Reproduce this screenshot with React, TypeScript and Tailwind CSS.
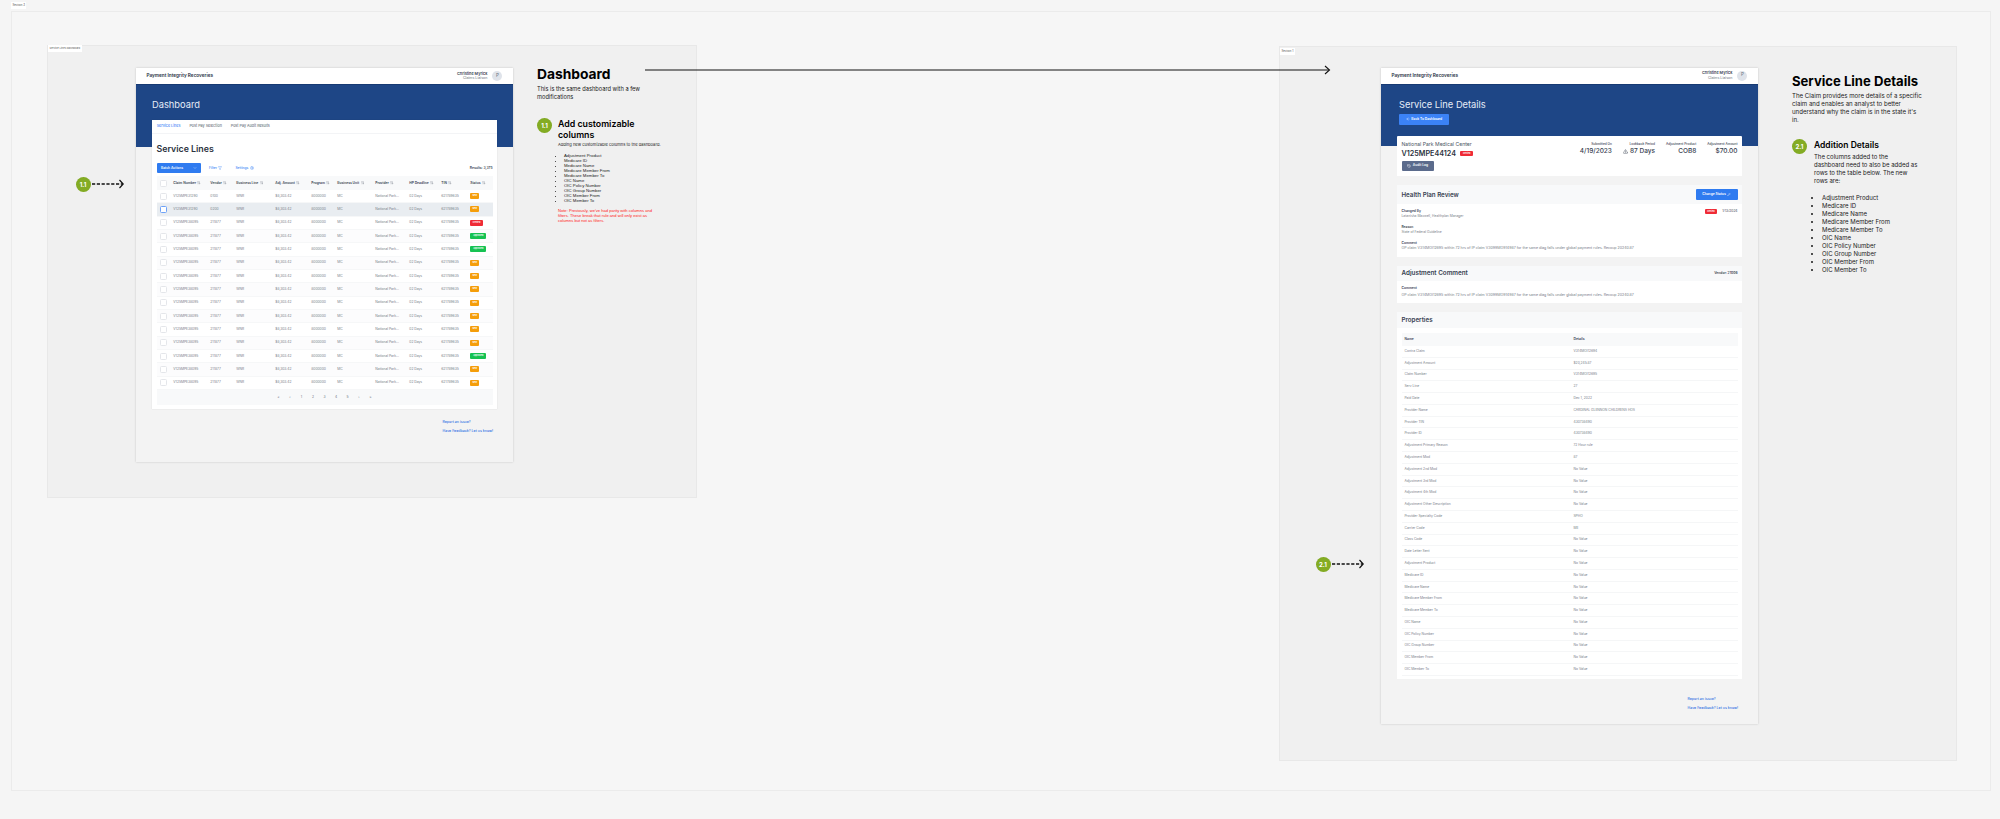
import { ArrowLeft, ArrowUpDown, ChevronDown, Filter, History, Pencil, Settings, TriangleAlert } from 'lucide-react';

const columns = ['Claim Number', 'Vendor', 'Business Line', 'Adj. Amount', 'Program', 'Business Unit', 'Provider', 'HP Deadline', 'TIN', 'Status'];

const rows = [
  { claim: 'V125MPE31290', vendor: '0100', status: 'New' },
  { claim: 'V125MPE31290', vendor: '0200', status: 'New', selected: true },
  { claim: 'V125MPE38095', vendor: '211877', status: 'Denied' },
  { claim: 'V125MPE38095', vendor: '211877', status: 'Approved' },
  { claim: 'V125MPE38095', vendor: '211877', status: 'Approved' },
  { claim: 'V125MPE38095', vendor: '211877', status: 'New' },
  { claim: 'V125MPE38095', vendor: '211877', status: 'New' },
  { claim: 'V125MPE38095', vendor: '211877', status: 'New' },
  { claim: 'V125MPE38095', vendor: '211877', status: 'New' },
  { claim: 'V125MPE38095', vendor: '211877', status: 'New' },
  { claim: 'V125MPE38095', vendor: '211877', status: 'New' },
  { claim: 'V125MPE38095', vendor: '211877', status: 'New' },
  { claim: 'V125MPE38095', vendor: '211877', status: 'Approved' },
  { claim: 'V125MPE38095', vendor: '211877', status: 'New' },
  { claim: 'V125MPE38095', vendor: '211877', status: 'New' },
];

const properties = [
  ['Contra Claim', 'V314MOI12694'],
  ['Adjustment Amount', '$20,245.87'],
  ['Claim Number', 'V314MOI12695'],
  ['Serv Line', '27'],
  ['Paid Date', 'Dec 1, 2022'],
  ['Provider Name', 'CARDINAL GLENNON CHILDRENS HOS'],
  ['Provider TIN', '430738490'],
  ['Provider ID', '430738490'],
  ['Adjustment Primary Reason', '72 Hour rule'],
  ['Adjustment Mod', '87'],
  ['Adjustment 2nd Mod', 'No Value'],
  ['Adjustment 3rd Mod', 'No Value'],
  ['Adjustment 4th Mod', 'No Value'],
  ['Adjustment Other Description', 'No Value'],
  ['Provider Specialty Code', 'SPHO'],
  ['Carrier Code', 'ME'],
  ['Class Code', 'No Value'],
  ['Date Letter Sent', 'No Value'],
  ['Adjustment Product', 'No Value'],
  ['Medicare ID', 'No Value'],
  ['Medicare Name', 'No Value'],
  ['Medicare Member From', 'No Value'],
  ['Medicare Member To', 'No Value'],
  ['OIC Name', 'No Value'],
  ['OIC Policy Number', 'No Value'],
  ['OIC Group Number', 'No Value'],
  ['OIC Member From', 'No Value'],
  ['OIC Member To', 'No Value'],
];

const newColumns = ['Adjustment Product', 'Medicare ID', 'Medicare Name', 'Medicare Member From', 'Medicare Member To', 'OIC Name', 'OIC Policy Number', 'OIC Group Number', 'OIC Member From', 'OIC Member To'];

const comment = 'OP claim V314MOI12695 within 72 hrs of IP claim V3099MO914987 for the same diag falls under global payment rules. Recoup 20240.87';

const rowGrid = 'grid grid-cols-[13.8px_37px_26px_39px_36px_26px_38px_34px_32px_29px_1fr] items-center';

function StatusPill({ status }: { status: string }) {
  const color = status === 'New' ? 'bg-[#f59e0b] w-[9px]' : status === 'Denied' ? 'bg-[#ef2b36] w-[12.5px]' : 'bg-[#16c252] w-[16px]';
  return (
    <span className={`flex h-[6px] items-center justify-center rounded-[1px] text-[2.2px] font-semibold leading-none text-white ${color}`}>
      {status}
    </span>
  );
}

function Check({ active }: { active?: boolean }) {
  return <span className={`block h-[7px] w-[7px] rounded-[1.5px] bg-white border ${active ? 'border-[#6ea2f7]' : 'border-[#e4e6ea]'}`} />;
}

function AppHeader() {
  return (
    <div className="flex h-[16px] items-center justify-between bg-white pl-[10.5px] pr-[10.7px]">
      <span className="text-[4.7px] font-semibold text-[#27303f]">Payment Integrity Recoveries</span>
      <div className="flex items-center gap-[5px]">
        <div className="flex flex-col items-end leading-[5.4px]">
          <span className="text-[3.8px] font-semibold text-[#374151]">Christine Myrick</span>
          <span className="text-[3.6px] text-[#6b7280]">Claims Liaison</span>
        </div>
        <span className="flex h-[10px] w-[10px] items-center justify-center rounded-full bg-[#dfe3ea] text-[4.5px] text-[#6b7280]">P</span>
      </div>
    </div>
  );
}

function FooterLinks() {
  return (
    <div className="flex justify-end pr-[20px]">
      <div className="flex flex-col gap-[5.2px] text-[3.55px] font-medium leading-[3.8px] text-[#2f6fe4]">
        <span>Report an issue?</span>
        <span>Have Feedback? Let us know!</span>
      </div>
    </div>
  );
}

function DashboardScreen() {
  return (
    <div className="h-[394px] w-[377px] bg-[#f3f3f3] shadow-[0_0_2px_rgba(0,0,0,0.18)]">
      <AppHeader />
      <div className="h-[63px] border-t border-[#173a73] bg-[#1e4686] pl-[16px] pt-[13px]">
        <h2 className="text-[9.3px] leading-[14px] text-[#e6edf8]">Dashboard</h2>
      </div>
      <div className="relative mx-[16px] -mt-[27px] h-[289px] bg-white shadow-[0_0_1px_rgba(0,0,0,0.15)]">
        <div className="flex h-[13.5px] items-center gap-[9px] border-b border-[#f3f4f6] px-[4.7px] text-[3.7px] text-[#4b5563]">
          <span className="font-medium text-[#3b82f6]">Service Lines</span>
          <span>Post Pay Selection</span>
          <span>Post Pay Audit Results</span>
        </div>
        <div className="px-[4.5px]">
          <h3 className="pt-[8px] text-[8.8px] font-semibold leading-[13px] text-[#2b3340]">Service Lines</h3>
          <div className="mt-[8.5px] flex h-[10px] items-center text-[3.3px] font-medium">
            <button className="flex h-[10px] w-[44.5px] items-center justify-between rounded-[1px] bg-[#2f7bf0] px-[4.5px] text-white">
              <span className="font-semibold">Batch Actions</span>
              <ChevronDown className="h-[4px] w-[4px]" />
            </button>
            <span className="ml-[8px] flex items-center gap-[1.5px] text-[#3b82f6]">
              Filter <Filter className="h-[4px] w-[4px]" />
            </span>
            <span className="ml-[13px] flex items-center gap-[1.5px] text-[#3b82f6]">
              Settings <Settings className="h-[4px] w-[4px]" />
            </span>
            <span className="ml-auto font-semibold text-[#374151]">Results: 3,375</span>
          </div>
          <div className={`mt-[3px] h-[14px] bg-[#f8f9fa] pl-[3px] ${rowGrid}`}>
            <Check />
            {columns.map((c) => (
              <span key={c} className="flex items-center gap-[1.5px] whitespace-nowrap text-[3.3px] font-semibold text-[#374151]">
                {c} <ArrowUpDown className="h-[3.5px] w-[3.5px] text-[#6b7280]" />
              </span>
            ))}
          </div>
          {rows.map((r, i) => (
            <div key={i} className={`h-[13.33px] border-b border-[#f6f7f8] pl-[3px] text-[3.3px] text-[#777d88] ${rowGrid} ${r.selected ? 'bg-[#e9edf1]' : i % 2 === 1 ? 'bg-[#fcfcfd]' : 'bg-white'}`}>
              <Check active={r.selected} />
              <span>{r.claim}</span>
              <span>{r.vendor}</span>
              <span>WNR</span>
              <span>$8,303.42</span>
              <span>8000000</span>
              <span>MC</span>
              <span>National Park...</span>
              <span>02 Days</span>
              <span>621789635</span>
              <StatusPill status={r.status} />
            </div>
          ))}
          <div className="flex h-[15px] items-center justify-center gap-[8px] bg-[#f8f9fa] text-[3.3px] text-[#6b7280]">
            {['«', '‹', '1', '2', '3', '4', '5', '›', '»'].map((p) => (
              <span key={p} className="w-[3.5px] text-center">{p}</span>
            ))}
          </div>
        </div>
      </div>
      <div className="mt-[12px]">
        <FooterLinks />
      </div>
    </div>
  );
}

function DenyPill() {
  return <span className="flex h-[5.5px] w-[12.5px] items-center justify-center rounded-[1px] bg-[#ef2b36] text-[2.2px] font-semibold text-white">Denied</span>;
}

function SummaryStat({ label, value, icon }: { label: string; value: string; icon?: boolean }) {
  return (
    <div className="flex flex-col items-end">
      <span className="text-[3.2px] font-medium leading-[5px] text-[#374151]">{label}</span>
      <span className="flex items-center gap-[2px] text-[6.5px] font-medium leading-[9px] text-[#374151]">
        {icon && <TriangleAlert className="h-[5px] w-[5px]" />}
        {value}
      </span>
    </div>
  );
}

function Field({ label, value }: { label: string; value: string }) {
  return (
    <div>
      <div className="text-[3.3px] font-semibold leading-[5.5px] text-[#374151]">{label}</div>
      <div className="text-[3.3px] leading-[5.5px] text-[#777d88]">{value}</div>
    </div>
  );
}

function DetailsScreen() {
  return (
    <div className="h-[656.5px] w-[377px] bg-[#f3f3f3] shadow-[0_0_2px_rgba(0,0,0,0.18)]">
      <AppHeader />
      <div className="h-[62px] border-t border-[#173a73] bg-[#1e4686] pl-[18px] pt-[13.5px]">
        <h2 className="text-[9.3px] leading-[14px] text-[#e6edf8]">Service Line Details</h2>
        <button className="mt-[2px] flex h-[10.5px] w-[50px] items-center justify-center gap-[1.5px] rounded-[1px] bg-[#3b82f6] text-[3.3px] font-semibold text-white">
          <ArrowLeft className="h-[4px] w-[4px]" /> Back To Dashboard
        </button>
      </div>
      <div className="mx-[16px] flex flex-col gap-[9px]">
        <div className="relative -mt-[9.5px] flex h-[40px] justify-between rounded-t-[1px] bg-white pl-[4.5px] pr-[4.5px] pt-[5px]">
          <div>
            <div className="text-[5.1px] leading-[7px] text-[#4b5563]">National Park Medical Center</div>
            <div className="flex items-center gap-[4.5px] text-[7.2px] font-semibold leading-[11px] text-[#2b3340]">
              V125MPE44124 <DenyPill />
            </div>
            <button className="mt-[1.5px] flex h-[10px] w-[32.5px] items-center justify-center gap-[1.5px] rounded-[1px] bg-[#5b6b8c] text-[3.3px] font-semibold text-white">
              <History className="h-[4px] w-[4px]" /> Audit Log
            </button>
          </div>
          <div className="flex gap-[11px] pt-[0.5px]">
            <SummaryStat label="Submitted On" value="4/19/2023" />
            <SummaryStat label="Lookback Period" value="87 Days" icon />
            <SummaryStat label="Adjustment Product" value="COB8" />
            <SummaryStat label="Adjustment Amount" value="$70.00" />
          </div>
        </div>

        <div className="h-[72px] bg-white">
          <div className="flex h-[19px] items-center justify-between bg-[#f8f9fa] px-[4.5px]">
            <span className="text-[6.2px] font-semibold text-[#374151]">Health Plan Review</span>
            <button className="flex h-[10.5px] w-[42px] items-center justify-center gap-[1.5px] rounded-[1px] bg-[#2f7bf0] text-[3.3px] font-semibold text-white">
              Change Status <Pencil className="h-[3.5px] w-[3.5px]" />
            </button>
          </div>
          <div className="flex justify-between px-[4.5px] pt-[4.5px]">
            <div className="flex flex-col gap-[5px]">
              <Field label="Changed By" value="Latanisha Maxwell, Healthplan Manager" />
              <Field label="Reason" value="State of Federal Guideline" />
              <div>
                <div className="text-[3.3px] font-semibold leading-[5.5px] text-[#374151]">Comment</div>
                <div className="text-[3.6px] leading-[5.5px] text-[#777d88]">{comment}</div>
              </div>
            </div>
            <div className="flex h-[5.5px] items-center gap-[5px] text-[3.3px] text-[#374151]">
              <DenyPill /> 1/13/2024
            </div>
          </div>
        </div>

        <div className="h-[37px] bg-white">
          <div className="flex h-[15px] items-center justify-between bg-[#f8f9fa] px-[4.5px]">
            <span className="text-[6.3px] font-semibold text-[#374151]">Adjustment Comment</span>
            <span className="text-[3.3px] font-semibold text-[#374151]">Vendor: 21006</span>
          </div>
          <div className="px-[4.5px] pt-[4.5px]">
            <div className="text-[3.3px] font-semibold leading-[5.5px] text-[#374151]">Comment</div>
            <div className="mt-[2px] text-[3.6px] leading-[5.5px] text-[#777d88]">{comment}</div>
          </div>
        </div>

        <div className="h-[367px] bg-white">
          <div className="flex h-[16px] items-center bg-[#f8f9fa] px-[4.5px]">
            <span className="text-[6.2px] font-semibold text-[#374151]">Properties</span>
          </div>
          <div className="px-[4.5px] pt-[5px]">
            <div className="grid h-[13px] grid-cols-[169px_1fr] items-center bg-[#f8f9fa] pl-[3px] text-[3.3px] font-semibold text-[#374151]">
              <span>Name</span>
              <span>Details</span>
            </div>
            {properties.map(([name, value]) => (
              <div key={name} className="grid h-[11.79px] grid-cols-[169px_1fr] items-center border-b border-[#f5f6f7] pl-[3px] text-[3.3px] text-[#777d88]">
                <span>{name}</span>
                <span>{value}</span>
              </div>
            ))}
          </div>
        </div>
      </div>
      <div className="mt-[19px]">
        <FooterLinks />
      </div>
    </div>
  );
}

function StepBadge({ label }: { label: string }) {
  return (
    <span className="relative flex h-[15px] w-[15px] shrink-0 items-center justify-center rounded-full border border-dotted border-[#7fa821] bg-[#84ac24] text-[6px] font-bold text-white">
      {label}
    </span>
  );
}

function StepArrow({ width }: { width: number }) {
  return (
    <svg width={width} height="10" viewBox={`0 0 ${width} 10`} fill="none" stroke="#111" className="block">
      <line x1="0" y1="5" x2={width - 1} y2="5" strokeWidth="1.3" strokeDasharray="3.2 1.6" />
      <path d={`M${width - 4.5} 1 L${width - 0.8} 5 L${width - 4.5} 9`} strokeWidth="1.2" />
    </svg>
  );
}

function Bullets({ items, className }: { items: string[]; className: string }) {
  return (
    <ul className={`list-disc ${className}`}>
      {items.map((item) => (
        <li key={item}>{item}</li>
      ))}
    </ul>
  );
}

export default function App() {
  return (
    <div className="relative h-[819px] w-[2000px] overflow-hidden bg-[#f5f5f5] font-['Inter',sans-serif]">
      {/* Canvas section */}
      <div className="absolute left-[11px] top-[11px] h-[780px] w-[1980px] border border-[#ebebeb] bg-[#f6f6f6]" />
      <span className="absolute left-[11px] top-[2px] flex h-[7px] items-center bg-white px-[1.5px] text-[2.8px] text-[#555]">Section 3</span>

      {/* Frame 1 */}
      <div className="absolute left-[47px] top-[45px] h-[453px] w-[650px] border border-[#e8e8e8] bg-[#f0f0f0]" />
      <span className="absolute left-[48px] top-[45px] flex h-[7px] items-center bg-white px-[1.5px] text-[2.6px] text-[#555]">Service Lines Dashboard</span>
      <div className="absolute left-[136px] top-[68px]">
        <DashboardScreen />
      </div>
      <div className="absolute left-[75.5px] top-[176.5px] flex items-center gap-[1.5px]">
        <StepBadge label="1.1" />
        <StepArrow width={32} />
      </div>

      {/* Notes for frame 1 */}
      <div className="absolute left-[537px] top-[64px] w-[150px] text-[#1a1a1a]">
        <h2 className="text-[13.8px] font-bold leading-[20px] text-black">Dashboard</h2>
        <p className="mt-[1px] w-[118px] text-[5.7px] leading-[8px]">This is the same dashboard with a few modifications</p>
        <div className="mt-[17px] flex gap-[6px]">
          <StepBadge label="1.1" />
          <div className="w-[105px]">
            <h3 className="text-[8.8px] font-semibold leading-[11px] text-black">Add customizable columns</h3>
            <p className="mt-[1.5px] whitespace-nowrap text-[4.1px] leading-[5px]">Adding new customizable columns to the dashboard.</p>
            <Bullets items={newColumns} className="mt-[6px] pl-[6px] font-['Liberation_Sans',sans-serif] text-[4.3px] leading-[5px]" />
            <p className="mt-[5px] w-[104px] font-['Liberation_Sans',sans-serif] text-[4.1px] leading-[5px] text-[#ff1a1a]">
              Note: Previously, we've had parity with columns and filters. These break that rule and will only exist as columns but not as filters.
            </p>
          </div>
        </div>
      </div>

      {/* Frame 2 */}
      <div className="absolute left-[1279px] top-[46px] h-[715px] w-[678px] border border-[#e8e8e8] bg-[#f0f0f0]" />
      <span className="absolute left-[1280px] top-[48px] flex h-[7px] items-center bg-white px-[1.5px] text-[2.8px] text-[#555]">Section 1</span>
      <div className="absolute left-[1381px] top-[67.5px]">
        <DetailsScreen />
      </div>
      <div className="absolute left-[1315.5px] top-[556.5px] flex items-center gap-[1.5px]">
        <StepBadge label="2.1" />
        <StepArrow width={32} />
      </div>

      {/* Frame link */}
      <svg className="absolute left-[645px] top-[65px]" width="686" height="10" viewBox="0 0 686 10" fill="none" stroke="#111">
        <line x1="0" y1="5" x2="684" y2="5" strokeWidth="1.1" />
        <path d="M680 1 L684.5 5 L680 9" strokeWidth="1.1" />
      </svg>

      {/* Notes for frame 2 */}
      <div className="absolute left-[1792px] top-[70.5px] w-[135px] text-[#1a1a1a]">
        <h2 className="text-[13.1px] font-bold leading-[20px] text-black">Service Line Details</h2>
        <p className="mt-[1px] w-[131px] text-[6.1px] leading-[8.2px]">The Claim provides more details of a specific claim and enables an analyst to better understand why the claim is in the state it's in.</p>
        <div className="mt-[15px] flex gap-[7px]">
          <StepBadge label="2.1" />
          <div className="w-[112px]">
            <h3 className="mt-[1px] text-[8.5px] font-semibold leading-[11px] text-black">Addition Details</h3>
            <p className="mt-[1.5px] w-[110px] text-[6px] leading-[8.2px]">
              The columns added to the<br />dashboard need to also be added as<br />rows to the table below. The new<br />rows are:
            </p>
            <Bullets items={newColumns} className="mt-[8px] pl-[8px] text-[6px] leading-[8.1px]" />
          </div>
        </div>
      </div>
    </div>
  );
}
